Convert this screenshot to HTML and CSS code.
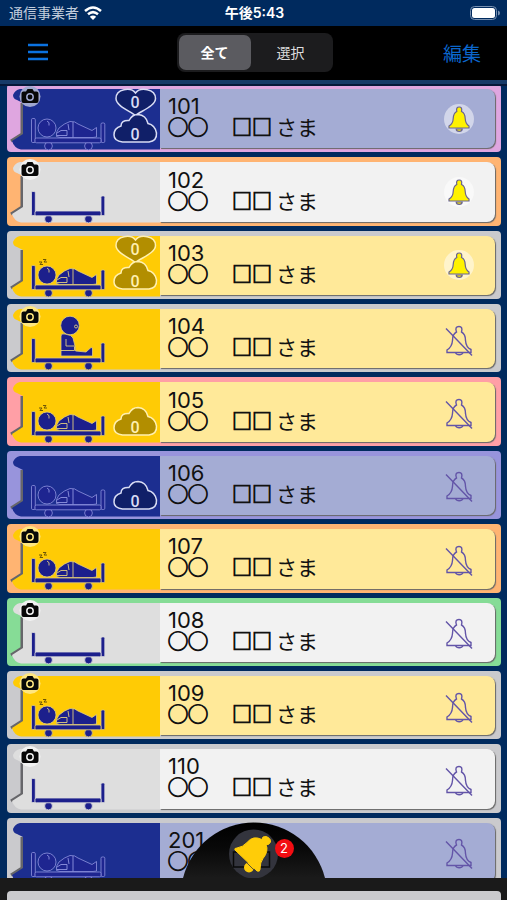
FILE: index.html
```html
<!DOCTYPE html>
<html lang="ja">
<head>
<meta charset="utf-8">
<meta name="viewport" content="width=device-width, initial-scale=1">
<title>見守り一覧</title>
<link rel="stylesheet" href="styles.css">
</head>
<body>
<svg class="defs" aria-hidden="true">
  <symbol id="panel" viewBox="0 0 153 68">
    <path class="notch" d="M15 19v31L4 57"/>
    <path class="panel" d="M153 5H13Q8 6 6 11Q6 15 10 16L16 19V50L5 57Q7 64 14 65.500H153Z"/>
  </symbol>
  <symbol id="camera" viewBox="0 0 153 68">
    <circle class="cam-bg" cx="23" cy="12.500" r="10.500"/>
    <path d="M16.500 7.500h2.500l1.500-2.500h5l1.500 2.500h2.500q2 0 2 2v7.500q0 2-2 2h-13q-2 0-2-2V9.500q0-2 2-2Z" fill="#080808"/>
    <circle class="lens" cx="23" cy="13" r="3.200"/>
  </symbol>
  <symbol id="bed" viewBox="0 0 153 68">
    <g class="ink">
      <circle cx="41.500" cy="62" r="3.900"/><circle cx="81.500" cy="62" r="3.900"/>
      <rect x="24.500" y="34.500" width="3.800" height="24" rx="1.200"/>
      <rect x="94" y="39" width="3.800" height="19.500" rx="1.200"/>
      <rect x="28" y="54" width="66" height="4.800" rx="1.500"/>
    </g>
  </symbol>
  <symbol id="lying" viewBox="0 0 153 68">
    <g class="ink">
      <circle cx="40" cy="44" r="9"/>
      <path d="M49.500 52.500V48.500L52 44Q57 39.500 63 37.500Q68 37 71 40L85 46.500L89.500 43.500V53L86 53.500H53Z"/>
    </g>
    <path class="seam" d="M50 49L54 46.500H60V51.500H50M61 40L62 46M66 38V53.500M40 37Q43 38 42 41.500"/>
  </symbol>
  <symbol id="snore" viewBox="0 0 153 68">
    <path d="M32 31h3l-2 2.500h3M36 28.500h3l-2 2.500h3" fill="none" stroke="#6d5608"/>
  </symbol>
  <symbol id="sitting" viewBox="0 0 153 68">
    <g class="ink">
      <circle cx="63" cy="21.500" r="9.300"/>
      <path d="M54 32Q54 29 58 30Q65 31 66 34L68 42L68.500 47L79 48L84 43.500L85.500 44V52H54Z"/>
    </g>
    <path class="seam" d="M59 35V42H67.500M54 46.500H67.500V42.500"/>
    <circle class="seam" cx="69" cy="22.500" r="1.500"/>
  </symbol>
  <symbol id="heart" viewBox="0 0 153 68">
    <path class="gauge" d="M128.500 31.500C123 27 109 22 109 14.500C109 4.500 124 3 128.500 9C133 3 148.500 4.500 148.500 14.500C148.500 22 134 27 128.500 31.500Z"/>
  </symbol>
  <symbol id="cloud" viewBox="0 0 153 68">
    <path class="gauge" d="M115.500 58Q107 57 107 51Q107 44 114 42Q114 36 122 36.500Q125 30.500 131 30.500Q139 31 141 39.500Q148 41 149.500 49Q150 57 142 58Z"/>
  </symbol>
  <symbol id="bell" viewBox="0 0 30 30">
    <path class="bell-fill" d="M12.200 25h6a3 2.300 0 0 1-6 0Z"/>
    <path class="bell-fill" d="M12.800 7.500Q11.800 3 15.200 3Q18.500 3 17.500 7.500Q21 9 21.200 14.500Q21.500 20 25 22V24H5V22Q9 20 9.200 14.500Q9.500 9 12.800 7.500Z"/>
  </symbol>
  <symbol id="bell-off" viewBox="0 0 30 34">
    <g class="bell-line">
      <path d="M12.500 8Q10.500 2.500 15 2.500Q19 2.500 17.500 8Q21.500 10 21.500 16.500Q22 23.500 27 25.500V28.500H3V26Q8 23 8.500 16.500Q8.500 10 12.500 8Z"/>
      <path d="M11.500 28.500a4 3.500 0 0 0 7.500 0M2 4.500L28 31.500"/>
    </g>
  </symbol>
</svg>

<header class="top">
  <div class="status">
    <div class="carrier">通信事業者
      <svg class="wifi" viewBox="0 0 18 14" aria-hidden="true"><g fill="none" stroke="#fff" stroke-width="2.500"><path d="M1 5Q9-2 17 5M4 8.300Q9 4 14 8.300"/></g><path d="M9 14L5.800 10.800Q9 8.300 12.200 10.800Z" fill="#fff"/></svg>
    </div>
    <time class="clock">午後5:43</time>
    <svg class="battery" viewBox="0 0 30 14" aria-hidden="true"><rect x=".5" y=".5" width="26" height="13" rx="4" fill="none" stroke="#7890b0"/><rect x="2" y="2" width="23" height="10" rx="2.500" fill="#fff"/><path d="M28 4.500q2 .5 2 2.500t-2 2.500Z" fill="#7890b0"/></svg>
  </div>
  <nav class="nav">
    <button class="menu" type="button" aria-label="メニュー"><svg viewBox="0 0 20 18"><path d="M0 2H20M0 9H20M0 16H20" stroke="#0b72e0" stroke-width="2.600"/></svg></button>
    <div class="segment">
      <button class="on" type="button">全て</button>
      <button type="button">選択</button>
    </div>
    <button class="edit" type="button">編集</button>
  </nav>
</header>

<main class="area">
<ul class="rooms">
  <li class="room orchid night">
    <svg class="art" viewBox="0 0 153 68"><use href="#panel"/><use href="#camera"/><use href="#bed"/><use href="#lying"/><use href="#heart"/><use href="#cloud"/><text x="128" y="24">0</text><text x="128" y="56">0</text></svg>
    <div class="card"><div class="who"><div>101</div><div class="name"><span class="mark">◯◯　</span><span class="mark">□□</span><span>さま</span></div></div><button class="alarm on" type="button" aria-label="101 通知オン"><svg><use href="#bell"/></svg></button></div>
  </li>
  <li class="room orange empty">
    <svg class="art" viewBox="0 0 153 68"><use href="#panel"/><use href="#camera"/><use href="#bed"/></svg>
    <div class="card"><div class="who"><div>102</div><div class="name"><span class="mark">◯◯　</span><span class="mark">□□</span><span>さま</span></div></div><button class="alarm on" type="button" aria-label="102 通知オン"><svg><use href="#bell"/></svg></button></div>
  </li>
  <li class="room gray day">
    <svg class="art" viewBox="0 0 153 68"><use href="#panel"/><use href="#snore"/><use href="#bed"/><use href="#lying"/><use href="#heart"/><use href="#cloud"/><text x="128" y="24">0</text><text x="128" y="56">0</text></svg>
    <div class="card"><div class="who"><div>103</div><div class="name"><span class="mark">◯◯　</span><span class="mark">□□</span><span>さま</span></div></div><button class="alarm on" type="button" aria-label="103 通知オン"><svg><use href="#bell"/></svg></button></div>
  </li>
  <li class="room gray day">
    <svg class="art" viewBox="0 0 153 68"><use href="#panel"/><use href="#camera"/><use href="#bed"/><use href="#sitting"/></svg>
    <div class="card"><div class="who"><div>104</div><div class="name"><span class="mark">◯◯　</span><span class="mark">□□</span><span>さま</span></div></div><button class="alarm" type="button" aria-label="104 通知オフ"><svg><use href="#bell-off"/></svg></button></div>
  </li>
  <li class="room pink day">
    <svg class="art" viewBox="0 0 153 68"><use href="#panel"/><use href="#snore"/><use href="#bed"/><use href="#lying"/><use href="#cloud"/><text x="128" y="56">0</text></svg>
    <div class="card"><div class="who"><div>105</div><div class="name"><span class="mark">◯◯　</span><span class="mark">□□</span><span>さま</span></div></div><button class="alarm" type="button" aria-label="105 通知オフ"><svg><use href="#bell-off"/></svg></button></div>
  </li>
  <li class="room violet night">
    <svg class="art" viewBox="0 0 153 68"><use href="#panel"/><use href="#bed"/><use href="#lying"/><use href="#cloud"/><text x="128" y="56">0</text></svg>
    <div class="card"><div class="who"><div>106</div><div class="name"><span class="mark">◯◯　</span><span class="mark">□□</span><span>さま</span></div></div><button class="alarm" type="button" aria-label="106 通知オフ"><svg><use href="#bell-off"/></svg></button></div>
  </li>
  <li class="room orange day">
    <svg class="art" viewBox="0 0 153 68"><use href="#panel"/><use href="#camera"/><use href="#snore"/><use href="#bed"/><use href="#lying"/></svg>
    <div class="card"><div class="who"><div>107</div><div class="name"><span class="mark">◯◯　</span><span class="mark">□□</span><span>さま</span></div></div><button class="alarm" type="button" aria-label="107 通知オフ"><svg><use href="#bell-off"/></svg></button></div>
  </li>
  <li class="room green empty">
    <svg class="art" viewBox="0 0 153 68"><use href="#panel"/><use href="#camera"/><use href="#bed"/></svg>
    <div class="card"><div class="who"><div>108</div><div class="name"><span class="mark">◯◯　</span><span class="mark">□□</span><span>さま</span></div></div><button class="alarm" type="button" aria-label="108 通知オフ"><svg><use href="#bell-off"/></svg></button></div>
  </li>
  <li class="room gray day">
    <svg class="art" viewBox="0 0 153 68"><use href="#panel"/><use href="#camera"/><use href="#snore"/><use href="#bed"/><use href="#lying"/></svg>
    <div class="card"><div class="who"><div>109</div><div class="name"><span class="mark">◯◯　</span><span class="mark">□□</span><span>さま</span></div></div><button class="alarm" type="button" aria-label="109 通知オフ"><svg><use href="#bell-off"/></svg></button></div>
  </li>
  <li class="room gray empty">
    <svg class="art" viewBox="0 0 153 68"><use href="#panel"/><use href="#camera"/><use href="#bed"/></svg>
    <div class="card"><div class="who"><div>110</div><div class="name"><span class="mark">◯◯　</span><span class="mark">□□</span><span>さま</span></div></div><button class="alarm" type="button" aria-label="110 通知オフ"><svg><use href="#bell-off"/></svg></button></div>
  </li>
  <li class="room gray night">
    <svg class="art" viewBox="0 0 153 68"><use href="#panel"/><use href="#bed"/><use href="#lying"/></svg>
    <div class="card"><div class="who"><div>201</div><div class="name"><span class="mark">◯◯　</span></div></div><button class="alarm" type="button" aria-label="201 通知オフ"><svg><use href="#bell-off"/></svg></button></div>
  </li>
</ul>
</main>

<footer class="dock">
  <button class="dome" type="button" aria-label="通知 2件">
    <svg viewBox="0 0 144 56">
      <defs><linearGradient id="shade" x1="0" y1="0" x2="0" y2="1"><stop offset="0" stop-color="#000"/><stop offset=".45" stop-color="#080808"/><stop offset="1" stop-color="#1a1a1a"/></linearGradient></defs>
      <path d="M0 56A73.200 73.200 0 0 1 142 56Z" fill="url(#shade)"/>
      <circle cx="70.500" cy="32" r="24.500" fill="#33343d"/>
      <path d="M50.500 30H67V45H50.500ZM70.500 30H86.500V45H70.500Z" fill="none" stroke="#090909" stroke-width="1.500"/>
      <circle cx="66" cy="45.500" r="5" fill="#ffcc08"/>
      <path d="M52 28Q51 26 54 26Q60 25 64 20.500Q70 13 79 17.500Q79 14 83 14.500Q88 16 87.500 20Q86 23.500 83 22.500Q86 29 80 36.500Q77 40 77 47.500Q77 50 74 49Z" fill="#ffcc08" stroke="#ffcc08"/>
      <path d="M54.500 31.500L72 49" stroke="#33343d" stroke-width=".8"/>
    </svg>
    <span class="badge">2</span>
  </button>
</footer>
<div class="next"><div class="room gray empty"></div></div>
</body>
</html>
```

FILE: styles.css
```css
* { box-sizing: border-box; }

body {
  margin: 0;
  height: 100vh;
  display: flex;
  flex-direction: column;
  overflow: hidden;
  background: #002a5e;
  font-family: Inter, "Noto Sans CJK JP", sans-serif;
  color: #111;
}

button {
  padding: 0;
  border: 0;
  background: none;
  font: inherit;
  color: inherit;
}

svg { display: block; }

.defs { position: absolute; width: 0; height: 0; }

/* Header */
.top {
  position: relative;
  z-index: 1;
  flex: none;
  border-bottom: 4px solid #173a68;
  box-shadow: 0 2px 0 #06183a;
}

.status {
  display: grid;
  grid-template-columns: 1fr auto 1fr;
  align-items: center;
  height: 26px;
  padding: 0 7px 0 9px;
  background: #002a5e;
  color: #fff;
  font-size: 14px;
  line-height: 20px;
}

.carrier { display: flex; align-items: center; gap: 5px; color: #c3cedd; }
.wifi { width: 18px; height: 14px; }
.clock { font-weight: 600; }
.battery { width: 30px; height: 14px; justify-self: end; }

.nav {
  display: grid;
  grid-template-columns: 1fr auto 1fr;
  align-items: center;
  height: 54px;
  padding: 0 26px 2px 28px;
  background: #000;
}

.menu { width: 20px; }
.menu svg { width: 20px; height: 18px; }

.segment {
  display: flex;
  padding: 2px;
  border-radius: 8px;
  background: #1c1c1e;
}

.segment button {
  width: 80px;
  height: 35px;
  border-radius: 7px;
  color: #ddd;
  font-size: 14px;
}

.segment .on { width: 72px; background: #5b5b60; color: #fff; font-weight: 700; }

.edit {
  justify-self: end;
  color: #0b66cc;
  font-size: 19px;
}

/* Room list */
.area { flex: 1; min-height: 0; display: flex; overflow: hidden; }

.rooms {
  flex: 1;
  display: grid;
  grid-auto-rows: 1fr;
  gap: 5px;
  margin: 0 6px -8px 7px;
  padding: 0;
  list-style: none;
}

.room {
  display: flex;
  min-width: 0;
  border-radius: 4px;
  background: var(--frame);
  overflow: hidden;
}

.orchid { --frame: #dfa6e0; }
.orange { --frame: #ffb472; }
.gray { --frame: #cacacd; }
.pink { --frame: #ff9fa6; }
.violet { --frame: #9894dc; }
.green { --frame: #86dc96; }

.night {
  --panel: #1c2e90; --card: #a4acd4; --cam: #a0a8d0; --gauge: #101f68;
  --ink: #1e2590; --line: #8f94e0; --rim: #d8dcf4;
}
.day {
  --panel: #ffcb05; --card: #ffe999; --cam: #ffe680; --gauge: #b28e00;
  --ink: #1c1f8c; --line: #e0cc80; --rim: #fff0b0;
}
.empty {
  --panel: #dedede; --card: #f2f2f2; --cam: #f2f2f2;
  --ink: #1c1f8c; --line: #dedede;
}

.art { flex: none; width: 153px; height: 68px; }
.panel { fill: var(--panel); }
.notch { fill: none; stroke: #66666a; stroke-width: 3; }
.cam-bg { fill: var(--cam); }
.lens { fill: none; stroke: var(--cam); stroke-width: 1.5; }
.ink { fill: var(--ink); stroke: var(--line); stroke-width: 0.8; }
.empty .ink { stroke: none; }
.seam { fill: none; stroke: var(--line); stroke-width: 0.9; }
.gauge { fill: var(--gauge); stroke: var(--rim); stroke-width: 1.5; }
.art text {
  fill: var(--rim);
  font-family: Roboto, sans-serif;
  font-size: 16px;
  font-weight: 500;
  text-anchor: middle;
}

.card {
  flex: 1;
  display: flex;
  align-items: center;
  justify-content: space-between;
  margin: 5px 6px 4px 0;
  padding: 0 21px 0 8px;
  border-radius: 0 8px 8px 0;
  background: var(--card);
  box-shadow: 1px 1px 1px #666;
}

.who {
  display: flex;
  flex-direction: column;
  padding-bottom: 3px;
  font-size: 22px;
  line-height: 22px;
  white-space: nowrap;
}

.name {
  display: flex;
  gap: 4px;
  font-family: Roboto, "Noto Sans CJK JP", sans-serif;
  font-size: 21px;
  line-height: 22px;
}

.mark { font-size: 20px; -webkit-text-stroke: 1px currentColor; }

.alarm {
  width: 30px;
  height: 30px;
  border-radius: 50%;
  display: grid;
  place-items: center;
}

.alarm svg { width: 30px; height: 34px; }
.alarm.on { background: rgba(255, 255, 255, 0.5); }
.alarm.on svg { height: 30px; }
.bell-fill { fill: #fff200; stroke: #6a6490; stroke-width: 1.2; }
.bell-line { fill: none; stroke: #6355a8; stroke-width: 1.4; }

/* Bottom dock */
.dock {
  position: relative;
  flex: none;
  height: 13px;
  background: #1a1a1a;
}

.dome {
  position: absolute;
  left: 50%;
  bottom: 100%;
  width: 144px;
  height: 56px;
  margin-left: -71px;
}

.dome svg { width: 144px; height: 56px; }

.badge {
  position: absolute;
  top: 17px;
  right: 33px;
  width: 19px;
  height: 19px;
  border-radius: 50%;
  background: #f30d12;
  color: #fff;
  font-size: 13px;
  line-height: 19px;
  text-align: center;
}

.next {
  flex: none;
  height: 9px;
  padding: 0 6px 0 7px;
  background: #1a1a1a;
  overflow: hidden;
}

.next .room { height: 68px; }
```
